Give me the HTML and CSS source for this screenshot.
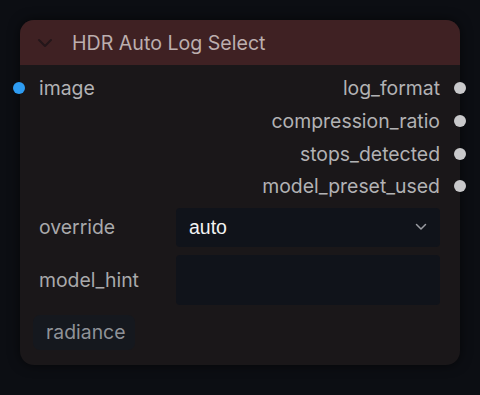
FILE: index.html
```html
<!DOCTYPE html>
<html lang="en">
  <head>
    <meta charset="UTF-8">
    <meta name="viewport" content="width=device-width, initial-scale=1.0">
    <title>HDR Auto Log Select</title>
    <link rel="stylesheet" href="styles.css">
  </head>
  <body>
    <!-- Node card -->
    <div class="node">
      <div class="node-header">
        <svg class="collapse" width="16" height="10" viewBox="0 0 16 10">
          <path d="M2 2 L8 8 L14 2" fill="none" stroke="#24161a" stroke-width="2" stroke-linecap="round" stroke-linejoin="round"/>
        </svg>
        <span class="node-title">HDR Auto Log Select</span>
      </div>

      <!-- Slots: inputs left, outputs right -->
      <div class="slots">
        <div class="slot slot-in"><span class="dot dot-blue"></span>image</div>
        <div class="slot slot-out">log_format<span class="dot dot-gray"></span></div>
        <div class="slot slot-out">compression_ratio<span class="dot dot-gray"></span></div>
        <div class="slot slot-out">stops_detected<span class="dot dot-gray"></span></div>
        <div class="slot slot-out">model_preset_used<span class="dot dot-gray"></span></div>
      </div>

      <!-- Widgets -->
      <div class="widgets">
        <div class="widget-row">
          <span class="widget-label">override</span>
          <div class="combo">
            <span class="combo-value">auto</span>
            <svg width="12" height="8" viewBox="0 0 12 8">
              <path d="M1.5 1.5 L6 6 L10.5 1.5" fill="none" stroke="#9a9ca2" stroke-width="1.5" stroke-linecap="round" stroke-linejoin="round"/>
            </svg>
          </div>
        </div>
        <div class="widget-row tall">
          <span class="widget-label">model_hint</span>
          <div class="text-box"></div>
        </div>
      </div>

      <div class="chips">
        <span class="chip">radiance</span>
      </div>
    </div>
  </body>
</html>
```

FILE: styles.css
```css
/* Canvas */
body {
  margin: 0;
  padding: 20px;
  background-color: #0c0e13;
  font-family: Inter, "Noto Sans", sans-serif;
}

.node {
  width: 440px;
  height: 345px;
  background: #1a1719;
  border-radius: 14px;
  box-shadow: 0 0 12px rgba(0, 0, 0, 0.6);
  box-sizing: border-box;
}

.node-header {
  height: 45px;
  background: #3f2123;
  border-radius: 14px 14px 0 0;
  display: flex;
  align-items: center;
  padding-left: 17px;
}

.collapse {
  margin-right: 19px;
}

.node-title {
  color: #bcaeae;
  font-size: 19.6px;
}

/* Slots */
.slots {
  padding-top: 7px;
  display: grid;
  grid-template-columns: 1fr 1fr;
  grid-auto-rows: 32.67px;
  color: #b2b2b4;
  font-size: 19.4px;
}

.slot {
  display: flex;
  align-items: center;
}

.slot-in {
  grid-column: 1;
  grid-row: 1;
  margin-left: -7px;
  gap: 14px;
}

.slot-out {
  grid-column: 2;
  justify-content: flex-end;
  margin-right: -6px;
  gap: 14px;
}

.dot {
  width: 12px;
  height: 12px;
  border-radius: 50%;
  flex-shrink: 0;
}

.dot-blue {
  background: #2e9cf2;
}

.dot-gray {
  background: #c9c9cb;
}

/* Widgets */
.widgets {
  padding: 5px 20px 0 19px;
  display: flex;
  flex-direction: column;
  gap: 8px;
}

.widget-row {
  height: 39px;
  display: flex;
  align-items: center;
}

.widget-row.tall {
  height: 50px;
}

.widget-label {
  width: 137px;
  color: #a9a9ab;
  font-size: 19.4px;
}

.combo, .text-box {
  flex: 1;
  height: 100%;
  background: #10131a;
  border-radius: 4px;
}

.combo {
  display: flex;
  align-items: center;
  justify-content: space-between;
  padding: 0 13px 0 13px;
}

.combo-value {
  color: #f2f2f2;
  font-family: "Liberation Sans", Arial, sans-serif;
  font-size: 19.5px;
}

/* Chips */
.chips {
  padding: 10px 0 0 13px;
}

.chip {
  display: inline-block;
  height: 35px;
  line-height: 35px;
  padding: 0 9px 0 13px;
  background: #15181e;
  border-radius: 7px;
  color: #8f9298;
  font-size: 19.4px;
}
```
